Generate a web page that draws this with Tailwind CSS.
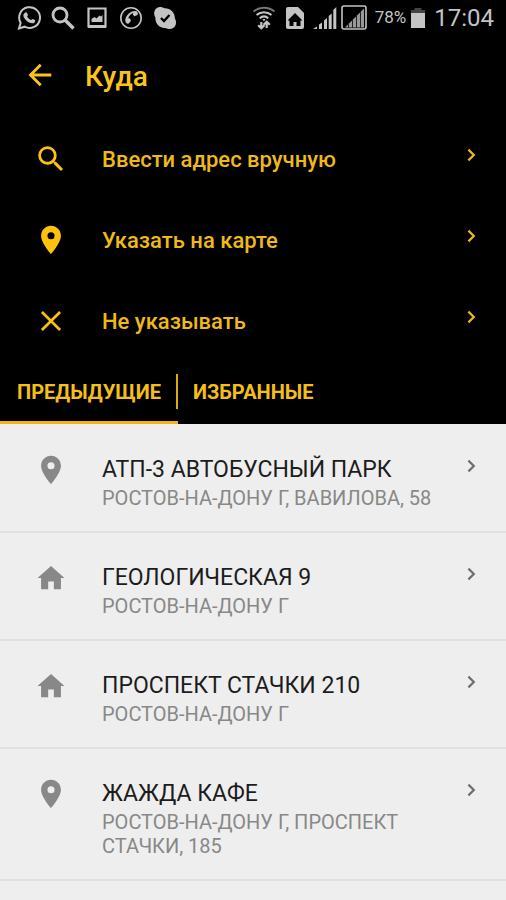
<!DOCTYPE html>
<html lang="ru">
<head>
<meta charset="utf-8">
<meta name="viewport" content="width=device-width, initial-scale=1">
<title>Куда</title>
<script src="https://cdn.jsdelivr.net/npm/@tailwindcss/browser@4"></script>
</head>
<body class="min-h-screen bg-[#eeeeee] font-['Roboto',sans-serif]">
<svg class="hidden" aria-hidden="true">
  <symbol id="pin" viewBox="0 0 24 24"><path fill="currentColor" d="M12 2C8.13 2 5 5.13 5 9c0 5.25 7 13 7 13s7-7.75 7-13c0-3.87-3.13-7-7-7zm0 9.5a2.5 2.5 0 1 1 0-5 2.5 2.5 0 0 1 0 5z"/></symbol>
  <symbol id="home" viewBox="0 0 24 24"><path fill="currentColor" d="M10 20v-5.500h4V20h5v-8h2.500L12 3.500 2.500 12H5v8z"/></symbol>
  <symbol id="search" viewBox="0 0 24 24"><path fill="currentColor" d="M15.5 14h-.79l-.28-.27A6.471 6.471 0 0 0 16 9.5 6.5 6.5 0 1 0 9.5 16c1.61 0 3.09-.59 4.23-1.57l.27.28v.79l5 4.99L20.49 19l-4.99-5zm-6 0C7.01 14 5 11.99 5 9.5S7.01 5 9.5 5 14 7.01 14 9.5 11.99 14 9.5 14z"/></symbol>
  <symbol id="close" viewBox="0 0 24 24"><path fill="none" stroke="currentColor" stroke-width="1.900" d="M5.6 5.6l12.8 12.8M18.4 5.6L5.6 18.4"/></symbol>
  <symbol id="chevron" viewBox="0 0 24 24"><path fill="none" stroke="currentColor" stroke-width="2.200" d="M9.4 6.6l5.400 5.400-5.400 5.400"/></symbol>
</svg>

<div class="flex h-9 items-center justify-between bg-black pr-3 pl-4 text-[#c4c4c4]">
  <div class="flex items-center gap-2">
    <svg class="size-[26px]" viewBox="0 0 26 26" fill="none" stroke="currentColor" stroke-width="2"><path d="M3 23.500l1.600-5.700a10.400 10.400 0 1 1 4 3.900z"/><path fill="currentColor" stroke="none" d="M9.300 7.500c.6-.5 1.300-.4 1.600.2l1 2.100c.2.500-.8 1.500-.8 1.800 1 1.700 2 2.700 3.900 3.500.4.100 1.200-1.400 1.700-1.200l2.300 1.200c.5.300.2 1.700-.5 2.300-1.500 1.300-3.500.9-5.400 0-2.400-1.100-4.500-3.300-5.400-5.400-.7-1.700-.3-3.300 1.600-4.500z"/></svg>
    <svg class="size-[26px]" viewBox="0 0 26 26" fill="none" stroke="currentColor"><circle cx="10" cy="10" r="7" stroke-width="2.800"/><path stroke-width="3.600" d="M15 15l8.500 8.500"/></svg>
    <svg class="size-[26px]" viewBox="0 0 26 26"><path fill="none" stroke="currentColor" stroke-width="2.200" d="M4.500 3.500h17v18h-17z"/><path fill="currentColor" d="M7.500 17v-3l3-2 2 1.500 3-3 1.500 1 1.500-1.500v7zM4 20h18v3H4z"/></svg>
    <svg class="size-[26px]" viewBox="0 0 26 26"><circle cx="13" cy="13" r="10.200" fill="none" stroke="currentColor" stroke-width="1.600"/><path fill="currentColor" d="M18.500 6.300c1.400 1 1.800 2.200 1 3.700l-3.200 1.300-1.500-1.800.5-1.500c-2 .4-4.600 3-4.900 5.300l1.700.3.800 2.400-2.200 2.600c-1.500.4-2.600-.3-3.200-1.800-.8-2.800.6-6 3.300-8.400 2.500-2.200 5.300-3.100 7.700-2.100z"/></svg>
    <svg class="size-[26px]" viewBox="0 0 26 26"><path fill="currentColor" d="M8 2c2 0 3.300.7 4.400 1.300C18.300 3 23 7.600 22.900 13.600 25.800 18.500 23 24 17.800 24c-1.700 0-3-.5-3.900-1.100C7.400 23.500 3 18.500 3.400 12.500.4 7.500 3.300 2.100 8 2z"/><path fill="none" stroke="#000" stroke-width="2.400" d="M9 13l3 3 5.500-6"/></svg>
  </div>
  <div class="flex items-center">
    <svg class="h-[26px] w-[26px]" viewBox="0 0 26 26" fill="none" stroke="currentColor" stroke-width="2"><path stroke="#777" d="M2.500 6.500c6-5 15-5 21 0"/><path d="M5.500 10c4.300-3.800 10.700-3.800 15 0M8.700 13.200c2.600-2.200 6-2.200 8.600 0"/><path fill="currentColor" stroke="none" d="M11.500 14h3L13 16.500z"/><path stroke-width="2.200" d="M10.300 17v6.500M15.700 23v-6.500M7.200 20.200l3.100 3.100 3.100-3.100M12.600 19.800l3.100-3.100 3.100 3.100"/></svg>
    <svg class="ml-2 h-[26px] w-5" viewBox="0 0 20 26"><path fill="currentColor" d="M3 2h10l6 6v14a2 2 0 0 1-2 2H3a2 2 0 0 1-2-2V4a2 2 0 0 1 2-2z"/><path fill="#000" d="M10 8l7.500 7.500h-2V21h-4v-4h-3v4h-4v-5.500h-2z"/></svg>
    <svg class="ml-2 h-[26px] w-6" viewBox="0 0 24 26" fill="currentColor"><path d="M0 24l4-2.500V24zM6 19.500l3-2V24H6zM11 15.500l3-2.500v11h-3zM15.700 11l3-2.500V24h-3zM20.300 5l3-3v22h-3z"/></svg>
    <svg class="ml-1 h-[26px] w-[26px]" viewBox="0 0 26 26"><rect x="1" y="1" width="24" height="23" rx="2" fill="none" stroke="currentColor" stroke-width="1.600"/><path fill="#999" d="M4 22.500l19-19v19z"/><path stroke="#222" stroke-width="1" d="M7.500 18v5M11.500 14v9M15.500 10v13M19.500 6v17"/></svg>
    <span class="ml-2 text-[17px]">78%</span>
    <svg class="ml-1 h-[26px] w-4" viewBox="0 0 16 26"><path fill="#444" d="M4.500 3h7v2h-7zM1 5h14v5H1z"/><path fill="currentColor" d="M1 8h14v15H1z"/></svg>
    <span class="ml-2 text-2xl">17:04</span>
  </div>
</div>

<header class="bg-black text-[#fcc419]">
  <div class="flex h-[82px] items-center pb-1 pl-[23px]">
    <button type="button" aria-label="Назад" class="size-[34px]"><svg class="size-full" viewBox="0 0 24 24" fill="none" stroke="currentColor" stroke-width="2"><path d="M20 12H5.500M12.500 4.800L5.300 12l7.200 7.200"/></svg></button>
    <h1 class="ml-7 pt-1 text-[28px] font-medium">Куда</h1>
  </div>
  <nav aria-label="Способ указания адреса" class="text-[22px] font-medium text-[#efba18]">
    <a href="#manual" class="flex h-[81px] items-center pr-[23px] pl-[34px]"><svg class="size-[34px] shrink-0 text-[#fdc20f]"><use href="#search"/></svg><span class="ml-[34px] flex-1 pt-px">Ввести адрес вручную</span><svg class="mb-2 size-6 shrink-0"><use href="#chevron"/></svg></a>
    <a href="#map" class="flex h-[81px] items-center pr-[23px] pl-[34px]"><svg class="size-[34px] shrink-0 text-[#fdc20f]"><use href="#pin"/></svg><span class="ml-[34px] flex-1 pt-px">Указать на карте</span><svg class="mb-2 size-6 shrink-0"><use href="#chevron"/></svg></a>
    <a href="#none" class="flex h-[81px] items-center pr-[23px] pl-[34px]"><svg class="size-[34px] shrink-0 text-[#fdc20f]"><use href="#close"/></svg><span class="ml-[34px] flex-1 pt-px">Не указывать</span><svg class="mb-2 size-6 shrink-0"><use href="#chevron"/></svg></a>
  </nav>
  <div role="tablist" class="flex h-[63px] text-xl font-bold text-[#f5bf1a]">
    <button type="button" role="tab" aria-selected="true" class="flex items-center border-b-3 border-[#f5b312] pl-[17px]"><span class="pt-px pr-[15px]">ПРЕДЫДУЩИЕ</span><span class="h-[35px] w-[2px] bg-[#e0a815]"></span></button>
    <button type="button" role="tab" aria-selected="false" class="border-b-3 border-transparent px-[15px] pt-px">ИЗБРАННЫЕ</button>
  </div>
</header>

<main class="pt-px">
  <ul class="divide-y-2 divide-[#e0e0e0] border-b-2 border-[#e0e0e0] text-[#1c1c1c]">
    <li><a href="#atp" class="flex items-start pt-7 pr-[23px] pb-[21px] pl-[34px]"><svg class="size-[34px] shrink-0 text-[#888888]"><use href="#pin"/></svg><span class="ml-[34px] flex-1"><span class="mt-[2px] block text-[23px] leading-[29px]">АТП-3 АВТОБУСНЫЙ ПАРК</span><span class="mt-[2px] block text-xl leading-6 text-[#888888]">РОСТОВ-НА-ДОНУ Г, ВАВИЛОВА, 58</span></span><svg class="mt-[1px] size-6 shrink-0 text-[#6e6e6e]"><use href="#chevron"/></svg></a></li>
    <li><a href="#geo" class="flex items-start pt-7 pr-[23px] pb-[21px] pl-[34px]"><svg class="size-[34px] shrink-0 text-[#888888]"><use href="#home"/></svg><span class="ml-[34px] flex-1"><span class="mt-[2px] block text-[23px] leading-[29px]">ГЕОЛОГИЧЕСКАЯ 9</span><span class="mt-[2px] block text-xl leading-6 text-[#888888]">РОСТОВ-НА-ДОНУ Г</span></span><svg class="mt-[1px] size-6 shrink-0 text-[#6e6e6e]"><use href="#chevron"/></svg></a></li>
    <li><a href="#stachki" class="flex items-start pt-7 pr-[23px] pb-[21px] pl-[34px]"><svg class="size-[34px] shrink-0 text-[#888888]"><use href="#home"/></svg><span class="ml-[34px] flex-1"><span class="mt-[2px] block text-[23px] leading-[29px]">ПРОСПЕКТ СТАЧКИ 210</span><span class="mt-[2px] block text-xl leading-6 text-[#888888]">РОСТОВ-НА-ДОНУ Г</span></span><svg class="mt-[1px] size-6 shrink-0 text-[#6e6e6e]"><use href="#chevron"/></svg></a></li>
    <li><a href="#cafe" class="flex items-start pt-7 pr-[23px] pb-[21px] pl-[34px]"><svg class="size-[34px] shrink-0 text-[#888888]"><use href="#pin"/></svg><span class="ml-[34px] flex-1"><span class="mt-[2px] block text-[23px] leading-[29px]">ЖАЖДА КАФЕ</span><span class="mt-[2px] block text-xl leading-6 text-[#888888]">РОСТОВ-НА-ДОНУ Г, ПРОСПЕКТ СТАЧКИ, 185</span></span><svg class="mt-[1px] size-6 shrink-0 text-[#6e6e6e]"><use href="#chevron"/></svg></a></li>
  </ul>
</main>
</body>
</html>
